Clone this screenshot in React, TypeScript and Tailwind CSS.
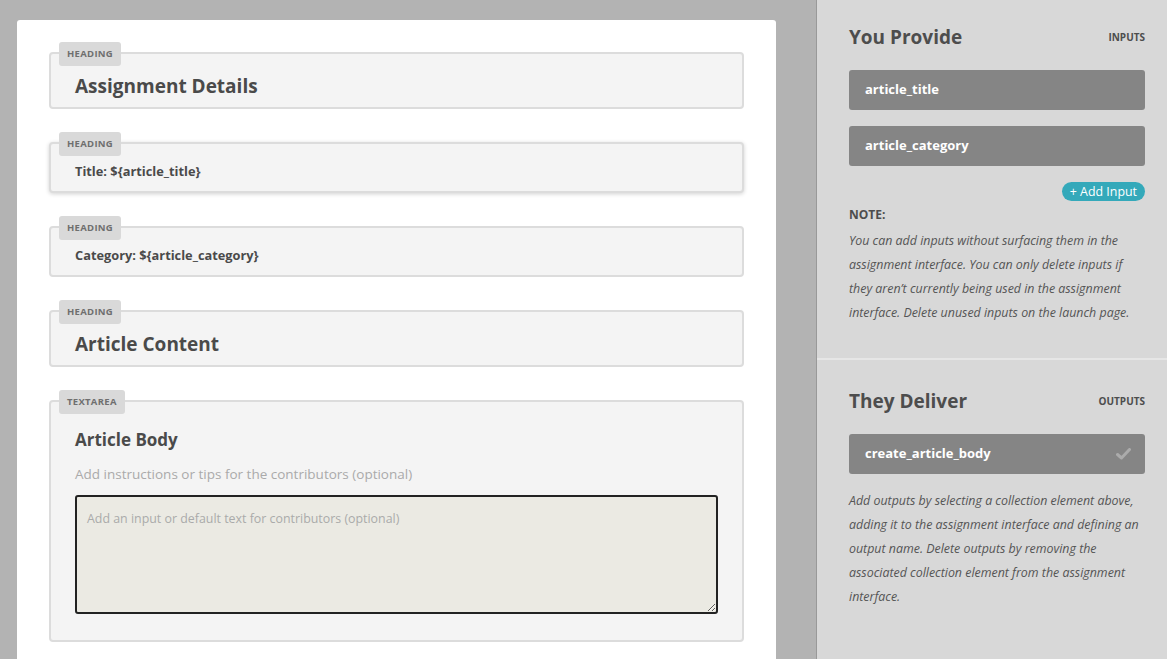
import type { ReactNode } from "react"

const font = { fontFamily: '"Open Sans", "Liberation Sans", sans-serif' }

function Block({
  tag,
  children,
  className = "",
}: {
  tag: string
  children: ReactNode
  className?: string
}) {
  return (
    <div
      className={`relative rounded-[4px] border-2 border-[#dcdcdc] bg-[#f4f4f4] px-[24px] ${className}`}
    >
      <span className="absolute -top-[12px] left-[8px] flex h-[24px] items-center rounded-[3px] bg-[#d9d9d9] px-[8px] text-[9.5px] font-bold tracking-[0.3px] text-[#6f6f6f]">
        {tag}
      </span>
      {children}
    </div>
  )
}

function Pill({ name, done }: { name: string; done?: boolean }) {
  return (
    <div className="flex h-[40px] items-center justify-between rounded-[3px] bg-[#858585] pl-[16px] pr-[14px] text-[13px] font-bold text-white">
      <span>{name}</span>
      {done && (
        <svg width="15" height="12" viewBox="0 0 15 12" fill="none">
          <path d="M1.5 6.5 L5.5 10 L13.5 1.5" stroke="#ababab" strokeWidth="3" strokeLinecap="round" strokeLinejoin="round" />
        </svg>
      )}
    </div>
  )
}

export default function App() {
  return (
    <div className="flex h-[659px] w-[1167px] overflow-hidden" style={font}>
      {/* canvas */}
      <div className="w-[816px] shrink-0 bg-[#b3b3b3] pl-[17px] pt-[20px]">
        <div className="h-[700px] w-[759px] rounded-t-[3px] bg-white px-[32px] pt-[32px]">
          <div className="flex flex-col gap-[33px] text-[#4a4a4a]">
            <Block tag="HEADING" className="pt-[19px] pb-[8px]">
              <h2 className="text-[19px] font-bold leading-[26px]">Assignment Details</h2>
            </Block>
            <Block tag="HEADING" className="pt-[18px] pb-[11px] shadow-[0_1px_4px_rgba(0,0,0,0.18)]">
              <p className="text-[12.8px] font-bold leading-[18px]">Title: ${"{article_title}"}</p>
            </Block>
            <Block tag="HEADING" className="pt-[18px] pb-[11px]">
              <p className="text-[12.8px] font-bold leading-[18px]">Category: ${"{article_category}"}</p>
            </Block>
            <Block tag="HEADING" className="pt-[19px] pb-[8px]">
              <h2 className="text-[19px] font-bold leading-[26px]">Article Content</h2>
            </Block>
            <Block tag="TEXTAREA" className="pt-[26px] pb-[26px]">
              <h3 className="text-[17px] font-bold leading-[24px]">Article Body</h3>
              <p className="mt-[12px] text-[13.5px] leading-[20px] text-[#aaa]">
                Add instructions or tips for the contributors (optional)
              </p>
              <textarea
                className="mt-[11px] block h-[119px] w-full rounded-[3px] border-2 border-[#222] bg-[#ebeae3] px-[10px] py-[13px] text-[12.4px] leading-[18px] text-[#444] outline-none placeholder:text-[#aaa]"
                placeholder="Add an input or default text for contributors (optional)"
              />
            </Block>
          </div>
        </div>
      </div>

      {/* sidebar */}
      <div className="flex-1 border-l border-[#999] bg-[#d8d8d8] text-[#555]">
        <section className="pl-[32px] pr-[22px] pt-[24px] pb-[33px]">
          <div className="flex items-center justify-between">
            <h2 className="text-[19px] font-bold leading-[26px] text-[#4d4d4d]">You Provide</h2>
            <span className="text-[10px] font-bold text-[#4d4d4d]">INPUTS</span>
          </div>
          <div className="mt-[20px] flex flex-col gap-[16px]">
            <Pill name="article_title" />
            <Pill name="article_category" />
          </div>
          <div className="mt-[16px] flex justify-end">
            <button className="h-[19px] rounded-full bg-[#34a9ba] px-[8px] text-[12.4px] leading-[19px] text-white">
              + Add Input
            </button>
          </div>
          <p className="mt-[6px] text-[12px] font-bold leading-[16px] text-[#4d4d4d]">NOTE:</p>
          <p className="mt-[6px] text-[12.4px] italic leading-[24px]">
            You can add inputs without surfacing them in the assignment interface. You can only delete
            inputs if they aren’t currently being used in the assignment interface. Delete unused inputs
            on the launch page.
          </p>
        </section>
        <div className="h-[2px] bg-[#e6e6e6]" />
        <section className="pl-[32px] pr-[22px] pt-[28px]">
          <div className="flex items-center justify-between">
            <h2 className="text-[19px] font-bold leading-[26px] text-[#4d4d4d]">They Deliver</h2>
            <span className="text-[10px] font-bold text-[#4d4d4d]">OUTPUTS</span>
          </div>
          <div className="mt-[20px]">
            <Pill name="create_article_body" done />
          </div>
          <p className="mt-[15px] text-[12.4px] italic leading-[24px]">
            Add outputs by selecting a collection element above, adding it to the assignment interface
            and defining an output name. Delete outputs by removing the associated collection element
            from the assignment interface.
          </p>
        </section>
      </div>
    </div>
  )
}
